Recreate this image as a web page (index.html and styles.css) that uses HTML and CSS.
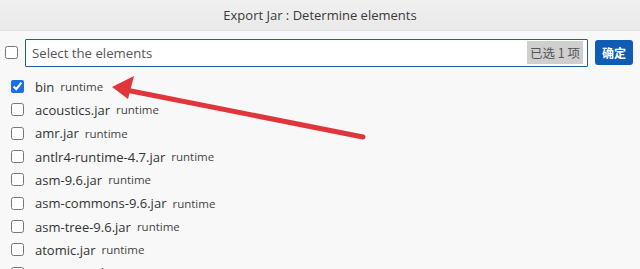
FILE: index.html
```html
<!DOCTYPE html>
<html>
<head>
<meta charset="utf-8">
<link rel="stylesheet" href="styles.css">
</head>
<body>
<div class="dialog">
  <div class="titlebar">Export Jar : Determine elements</div>
  <div class="filter">
    <input type="checkbox" class="cb">
    <div class="search">
      <span class="placeholder">Select the elements</span>
      <span class="badge">已选 1 项</span>
    </div>
    <button class="ok">确定</button>
  </div>
  <ul class="list">
    <li><input type="checkbox" class="cb" checked><span class="name">bin</span><span class="desc">runtime</span></li>
    <li><input type="checkbox" class="cb"><span class="name">acoustics.jar</span><span class="desc">runtime</span></li>
    <li><input type="checkbox" class="cb"><span class="name">amr.jar</span><span class="desc">runtime</span></li>
    <li><input type="checkbox" class="cb"><span class="name">antlr4-runtime-4.7.jar</span><span class="desc">runtime</span></li>
    <li><input type="checkbox" class="cb"><span class="name">asm-9.6.jar</span><span class="desc">runtime</span></li>
    <li><input type="checkbox" class="cb"><span class="name">asm-commons-9.6.jar</span><span class="desc">runtime</span></li>
    <li><input type="checkbox" class="cb"><span class="name">asm-tree-9.6.jar</span><span class="desc">runtime</span></li>
    <li><input type="checkbox" class="cb"><span class="name">atomic.jar</span><span class="desc">runtime</span></li>
    <li><input type="checkbox" class="cb"><span class="name">auto-complete-9.6.0.jar</span><span class="desc">runtime</span></li>
  </ul>
  <svg class="arrow" width="640" height="269" viewBox="0 0 640 269">
    <line x1="363" y1="137" x2="126" y2="90" stroke="#e0363b" stroke-width="5" stroke-linecap="round"/>
    <polygon points="112,87 134,76 128,99" fill="#e0363b"/>
  </svg>
</div>
</body>
</html>
```

FILE: styles.css
```css
* { box-sizing: border-box; }
html, body { margin: 0; padding: 0; }
body {
  width: 640px;
  height: 269px;
  overflow: hidden;
  background: #f8f8f8;
  font-family: "Open Sans", "Noto Sans CJK SC", sans-serif;
  color: #333;
}
.dialog { position: relative; height: 269px; overflow: hidden; }
.titlebar {
  height: 31px;
  background: linear-gradient(#f0f0f0, #e9e9e9);
  border-bottom: 1px solid #e2e2e2;
  display: flex;
  align-items: center;
  justify-content: center;
  font-size: 13px;
  color: #3a3a3a;
}
.filter {
  display: flex;
  align-items: center;
  height: 38px;
  padding: 5px 7px 0 5px;
}
.cb {
  width: 13px;
  height: 13px;
  margin: 0;
  accent-color: #1a6ee0;
  flex: none;
}
.search {
  margin-left: 7px;
  width: 563px;
  height: 28px;
  border: 1px solid #1f5f9f;
  border-radius: 1px;
  background: #fff;
  display: flex;
  align-items: center;
  justify-content: space-between;
  padding: 0 4px 0 6px;
}
.placeholder { font-size: 13.2px; color: #555; }
.badge {
  font-family: "Noto Sans CJK SC", sans-serif;
  background: #cfcfcf;
  color: #555;
  font-size: 12.5px;
  height: 23px;
  line-height: 23px;
  padding: 0 3px;
}
.ok {
  margin-left: 7px;
  width: 38px;
  height: 25px;
  border: none;
  border-radius: 3px;
  background: #0f5cb5;
  color: #fff;
  font-family: "Noto Sans CJK SC", sans-serif;
  font-weight: bold;
  font-size: 12px;
  padding: 0;
}
.list {
  list-style: none;
  margin: 0;
  padding: 6px 0 0 11px;
}
.list li {
  height: 23.33px;
  display: flex;
  align-items: center;
}
.name { margin-left: 11px; font-size: 13px; color: #333; }
.desc { margin-left: 6px; font-size: 11.5px; color: #444; }
.arrow { position: absolute; left: 0; top: 0; pointer-events: none; }
```
